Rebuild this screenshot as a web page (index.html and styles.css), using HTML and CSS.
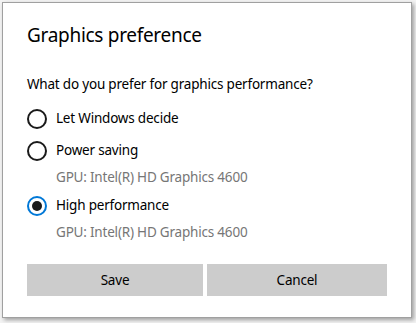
FILE: index.html
```html
<!DOCTYPE html>
<html>
<head>
<meta charset="utf-8">
<link rel="stylesheet" href="styles.css">
</head>
<body>
<div class="dialog">
  <h1 class="title">Graphics preference</h1>
  <p class="question">What do you prefer for graphics performance?</p>
  <div class="options">
    <label class="option">
      <span class="radio"></span>
      <span class="label">Let Windows decide</span>
    </label>
    <label class="option">
      <span class="radio"></span>
      <span class="label">Power saving</span>
    </label>
    <div class="gpu">GPU: Intel(R) HD Graphics 4600</div>
    <label class="option option-high">
      <span class="radio radio-checked"></span>
      <span class="label">High performance</span>
    </label>
    <div class="gpu">GPU: Intel(R) HD Graphics 4600</div>
  </div>
  <div class="buttons">
    <button class="btn btn-save">Save</button>
    <button class="btn btn-cancel">Cancel</button>
  </div>
</div>
</body>
</html>
```
FILE: styles.css
```css
html, body {
  margin: 0;
  padding: 0;
}
body {
  width: 416px;
  height: 323px;
  background: #f3f3f3;
  font-family: "Noto Sans", "Open Sans", sans-serif;
  color: #000;
  overflow: hidden;
  padding: 2px 0 0 2px;
  box-sizing: border-box;
}
.dialog {
  width: 410px;
  height: 316px;
  box-sizing: border-box;
  background: #fff;
  border: 1px solid #a0a0a0;
  box-shadow: 2px 2px 4px rgba(0, 0, 0, 0.35);
  padding: 18px 0 0 24px;
}
.title {
  margin: 0;
  font-size: 19px;
  letter-spacing: -0.3px;
  line-height: 28px;
  font-weight: 400;
}
.question {
  margin: 25px 0 0 0;
  font-size: 13.5px;
  letter-spacing: -0.2px;
  line-height: 20px;
}
.options {
  display: flex;
  flex-direction: column;
  margin-top: 15px;
}
.option {
  display: flex;
  align-items: center;
  gap: 9px;
  height: 20px;
  font-size: 13.5px;
  letter-spacing: -0.2px;
  line-height: 20px;
}
.option + .option {
  margin-top: 12px;
}
.option-high {
  margin-top: 9px;
}
.label {
  position: relative;
  top: -1px;
}
.radio {
  width: 20px;
  height: 20px;
  box-sizing: border-box;
  border: 2px solid #1a1a1a;
  border-radius: 50%;
  display: flex;
  align-items: center;
  justify-content: center;
  flex: none;
}
.radio-checked {
  border-color: #0078d7;
}
.radio-checked::after {
  content: "";
  width: 10px;
  height: 10px;
  border-radius: 50%;
  background: #1a1a1a;
}
.gpu {
  margin: 6px 0 0 29px;
  font-size: 13.5px;
  letter-spacing: -0.2px;
  line-height: 20px;
  color: #767676;
}
.buttons {
  display: flex;
  gap: 4px;
  margin-top: 22px;
}
.btn {
  height: 32px;
  border: none;
  background: #cccccc;
  font-family: inherit;
  font-size: 13.5px;
  letter-spacing: -0.2px;
  color: #000;
  padding: 0;
}
.btn-save {
  width: 176px;
}
.btn-cancel {
  width: 180px;
}
```
